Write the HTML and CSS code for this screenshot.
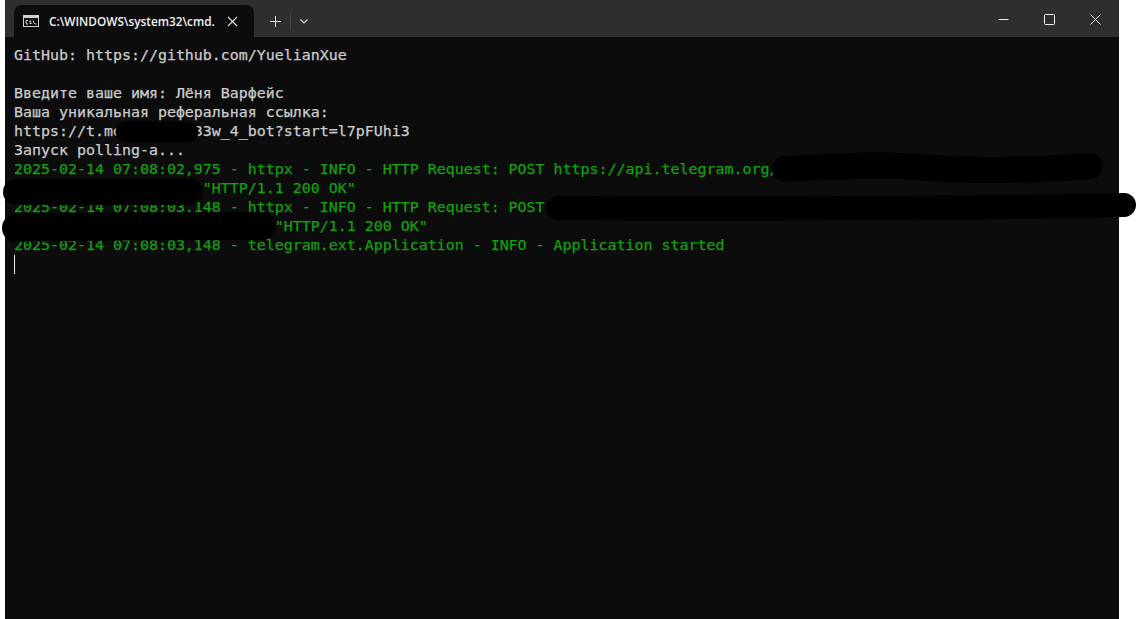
FILE: index.html
```html
<!DOCTYPE html>
<html lang="ru">
<head>
<meta charset="utf-8">
<title>cmd</title>
<link rel="stylesheet" href="styles.css">
</head>
<body>
<div class="page">
  <div class="window">
    <header class="titlebar">
      <div class="tab">
        <svg class="tab-icon" width="16" height="12" viewBox="0 0 16 12"><rect x="0.5" y="0.5" width="15" height="11" fill="#0c0c0c" stroke="#d0d0d0"/><rect x="1" y="1" width="14" height="2" fill="#d0d0d0"/><path d="M5 5.5H3.2V9H5M6.5 8.5h1.8L6.5 6h1.8M10 5.5 11.5 9M12 9h1.5" fill="none" stroke="#e8e8e8" stroke-width="0.9"/></svg>
        <span class="tab-title">C:\WINDOWS\system32\cmd.</span>
        <svg class="tab-close" width="11" height="11" viewBox="0 0 11 11"><path d="M1 1 10 10M10 1 1 10" stroke="#e4e4e4" stroke-width="1.1"/></svg>
      </div>
      <div class="tab-actions">
        <svg width="11" height="11" viewBox="0 0 11 11"><path d="M5.5 0V11M0 5.5H11" stroke="#dcdcdc" stroke-width="1"/></svg>
        <span class="divider"></span>
        <svg width="8" height="5" viewBox="0 0 8 5"><path d="M0.5 0.5 4 4 7.5 0.5" fill="none" stroke="#dcdcdc" stroke-width="1.1"/></svg>
      </div>
      <div class="controls">
        <svg width="11" height="11" viewBox="0 0 11 11"><path d="M0.5 5.5H10.5" stroke="#f0f0f0" stroke-width="1"/></svg>
        <svg width="11" height="11" viewBox="0 0 11 11"><rect x="0.5" y="0.5" width="10" height="10" rx="1" fill="none" stroke="#f0f0f0" stroke-width="1"/></svg>
        <svg width="11" height="11" viewBox="0 0 11 11"><path d="M0.5 0.5 10.5 10.5M10.5 0.5 0.5 10.5" stroke="#f0f0f0" stroke-width="1"/></svg>
      </div>
    </header>
    <main class="terminal">
<pre class="line">GitHub: https://github.com/YuelianXue</pre>
<pre class="line"> </pre>
<pre class="line">Введите ваше имя: Лёня Варфейс</pre>
<pre class="line">Ваша уникальная реферальная ссылка:</pre>
<pre class="line">https://t.me/xxxxxxx33w_4_bot?start=l7pFUhi3</pre>
<pre class="line">Запуск polling-а...</pre>
<pre class="line log">2025-02-14 07:08:02,975 - httpx - INFO - HTTP Request: POST https://api.telegram.org/</pre>
<pre class="line log">                     "HTTP/1.1 200 OK"</pre>
<pre class="line log">2025-02-14 07:08:03,148 - httpx - INFO - HTTP Request: POST</pre>
<pre class="line log">                             "HTTP/1.1 200 OK"</pre>
<pre class="line log">2025-02-14 07:08:03,148 - telegram.ext.Application - INFO - Application started</pre>
<div class="line"><span class="cursor"></span></div>
    </main>
  </div>
  <svg class="scribbles" width="1137" height="619" viewBox="0 0 1137 619">
    <g fill="none" stroke="#000" stroke-linecap="round" stroke-linejoin="round">
      <path d="M126 132H188" stroke-width="21"/>
      <path d="M785 169C850 166 880 164 920 167C960 171 1010 172 1090 166" stroke-width="26"/>
      <path d="M16 192H190" stroke-width="26"/>
      <path d="M558 208C700 209 900 209 1124 205" stroke-width="24"/>
      <path d="M16 228C90 226 180 226 262 226" stroke-width="28"/>
    </g>
  </svg>
</div>
</body>
</html>
```
FILE: styles.css
```css
html, body {
  margin: 0;
  padding: 0;
  background: #fff;
  overflow: hidden;
}

.page {
  position: relative;
  width: 1137px;
  height: 619px;
  overflow: hidden;
}

.window {
  display: flex;
  flex-direction: column;
  width: 1114px;
  height: 619px;
  margin-left: 5px;
  background: #0c0c0c;
}

.titlebar {
  display: flex;
  align-items: flex-end;
  flex: none;
  height: 37px;
  background: #2e2e2e;
  padding-left: 9px;
  box-sizing: border-box;
}

.tab {
  display: flex;
  align-items: center;
  width: 240px;
  height: 32px;
  box-sizing: border-box;
  padding: 0 16px 0 9px;
  background: #0c0c0c;
  border-radius: 8px 8px 0 0;
}

.tab-icon {
  flex: none;
}

.tab-title {
  margin-left: 10px;
  flex: 1;
  color: #f2f2f2;
  font: 600 11.8px/32px "Open Sans", "Noto Sans", sans-serif;
  white-space: nowrap;
}

.tab-close {
  flex: none;
}

.tab-actions {
  display: flex;
  align-items: center;
  height: 32px;
  margin-left: 16px;
}

.divider {
  width: 1px;
  height: 18px;
  margin: 0 9px;
  background: #454545;
}

.controls {
  display: flex;
  align-items: center;
  gap: 35px;
  height: 35px;
  margin-left: auto;
  padding-right: 18px;
}

.terminal {
  flex: 1;
  padding: 9px 9px 0;
}

.line {
  margin: 0;
  height: 19px;
  color: #cccccc;
  font: 14.95px/19px "DejaVu Sans Mono", monospace;
  white-space: pre;
  -webkit-text-stroke: 0.25px currentColor;
}

.log {
  color: #13a10e;
}

.cursor {
  display: block;
  width: 1px;
  height: 19px;
  background: #f2f2f2;
}

.scribbles {
  position: absolute;
  left: 0;
  top: 0;
  pointer-events: none;
}
```
